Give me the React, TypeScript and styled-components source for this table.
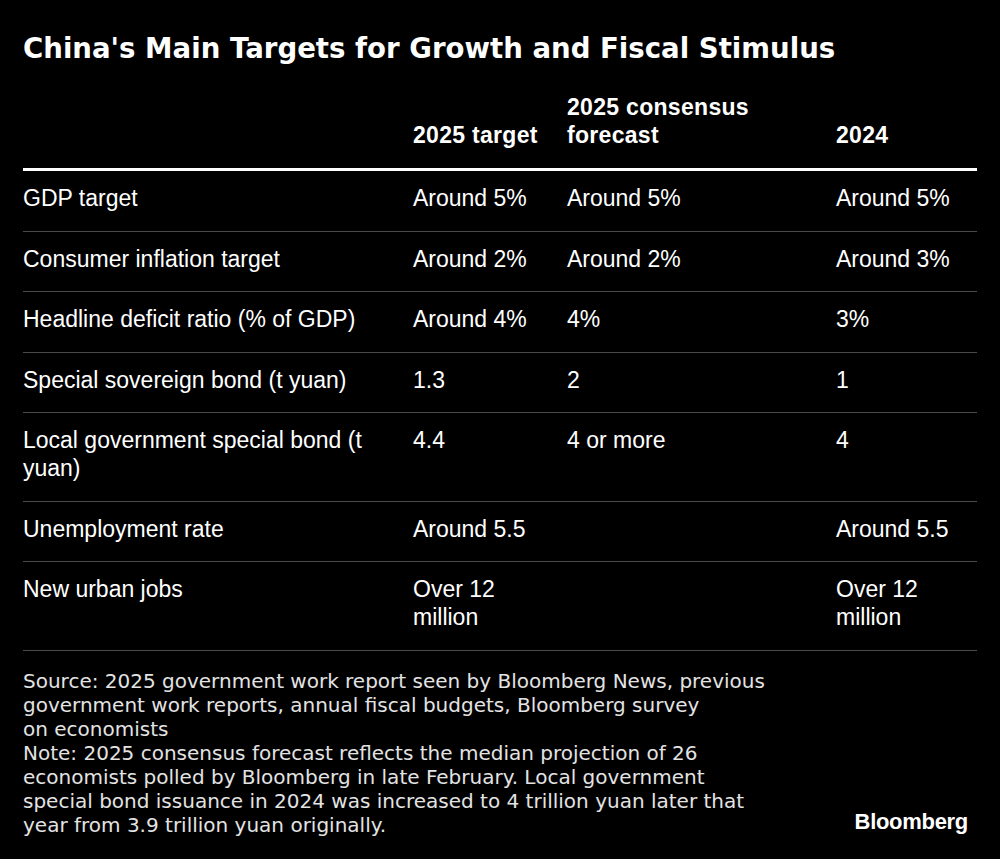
import React from 'react'
import styled, { createGlobalStyle } from 'styled-components'

const GlobalStyle = createGlobalStyle`
    html, body {
        margin: 0;
        padding: 0;
        background: #000;
    }
`

const rows = [
    { label: 'GDP target', target: 'Around 5%', consensus: 'Around 5%', prior: 'Around 5%' },
    { label: 'Consumer inflation target', target: 'Around 2%', consensus: 'Around 2%', prior: 'Around 3%' },
    { label: 'Headline deficit ratio (% of GDP)', target: 'Around 4%', consensus: '4%', prior: '3%' },
    { label: 'Special sovereign bond (t yuan)', target: '1.3', consensus: '2', prior: '1' },
    { label: 'Local government special bond (t yuan)', target: '4.4', consensus: '4 or more', prior: '4' },
    { label: 'Unemployment rate', target: 'Around 5.5', consensus: '', prior: 'Around 5.5' },
    { label: 'New urban jobs', target: 'Over 12 million', consensus: '', prior: 'Over 12 million' },
]

// footnote lines break where the original chart breaks them
const notes = [
    'Source: 2025 government work report seen by Bloomberg News, previous',
    'government work reports, annual fiscal budgets, Bloomberg survey',
    'on economists',
    'Note: 2025 consensus forecast reflects the median projection of 26',
    'economists polled by Bloomberg in late February. Local government',
    'special bond issuance in 2024 was increased to 4 trillion yuan later that',
    'year from 3.9 trillion yuan originally.',
]

const App = () => {
    return (
        <>
            <GlobalStyle />
            <Page>
                <Title>China's Main Targets for Growth and Fiscal Stimulus</Title>
                <Table>
                    <HeadRow>
                        <HeadCell />
                        <HeadCell>2025 target</HeadCell>
                        <HeadCell narrow>2025 consensus forecast</HeadCell>
                        <HeadCell>2024</HeadCell>
                    </HeadRow>
                    {rows.map((r) => (
                        <Row key={r.label}>
                            <Cell>{r.label}</Cell>
                            <Cell>{r.target}</Cell>
                            <Cell>{r.consensus}</Cell>
                            <Cell>{r.prior}</Cell>
                        </Row>
                    ))}
                </Table>
                <Footer>
                    <Notes>
                        {notes.map((line) => (
                            <NoteLine key={line}>{line}</NoteLine>
                        ))}
                    </Notes>
                    <Logo>Bloomberg</Logo>
                </Footer>
            </Page>
        </>
    )
}

export default App

const Page = styled.div`
    width: 1000px;
    height: 859px;
    box-sizing: border-box;
    padding: 31px 23px 0 23px;
    background: #000;
    color: #fff;
`

const Title = styled.h1`
    margin: 0;
    font-family: "DejaVu Sans", sans-serif;
    font-weight: bold;
    font-size: 27.6px;
    line-height: 36px;
`

const Table = styled.div`
    margin-top: 26px;
    font-family: "Liberation Sans", Arial, sans-serif;
    font-size: 23px;
`

const columns = '390px 154px 269px 141px'

const HeadRow = styled.div`
    display: grid;
    grid-template-columns: ${columns};
    align-items: end;
    padding-bottom: 19px;
    border-bottom: 3px solid #fff;
`

const HeadCell = styled.div<{ narrow?: boolean }>`
    font-weight: bold;
    line-height: 28px;
    letter-spacing: 0.3px;
    padding-right: 8px;
    max-width: ${(p) => (p.narrow ? '220px' : 'none')};
`

const Row = styled.div`
    display: grid;
    grid-template-columns: ${columns};
    align-items: start;
    padding: 13px 0 18.5px;
    border-bottom: 1px solid #4a4a4a;
`

const Cell = styled.div`
    line-height: 28px;
    padding-right: 16px;
`

const Footer = styled.div`
    display: flex;
    justify-content: space-between;
    align-items: flex-end;
    padding-top: 18px;
`

const Notes = styled.div`
    font-family: "DejaVu Sans", sans-serif;
    font-size: 20px;
    line-height: 24px;
    color: #e3e3e3;
`

const NoteLine = styled.div`
    white-space: nowrap;
`

const Logo = styled.div`
    font-family: "Liberation Sans", Arial, sans-serif;
    font-weight: bold;
    font-size: 22px;
    letter-spacing: -0.3px;
    margin-right: 9px;
    padding-bottom: 2px;
`
